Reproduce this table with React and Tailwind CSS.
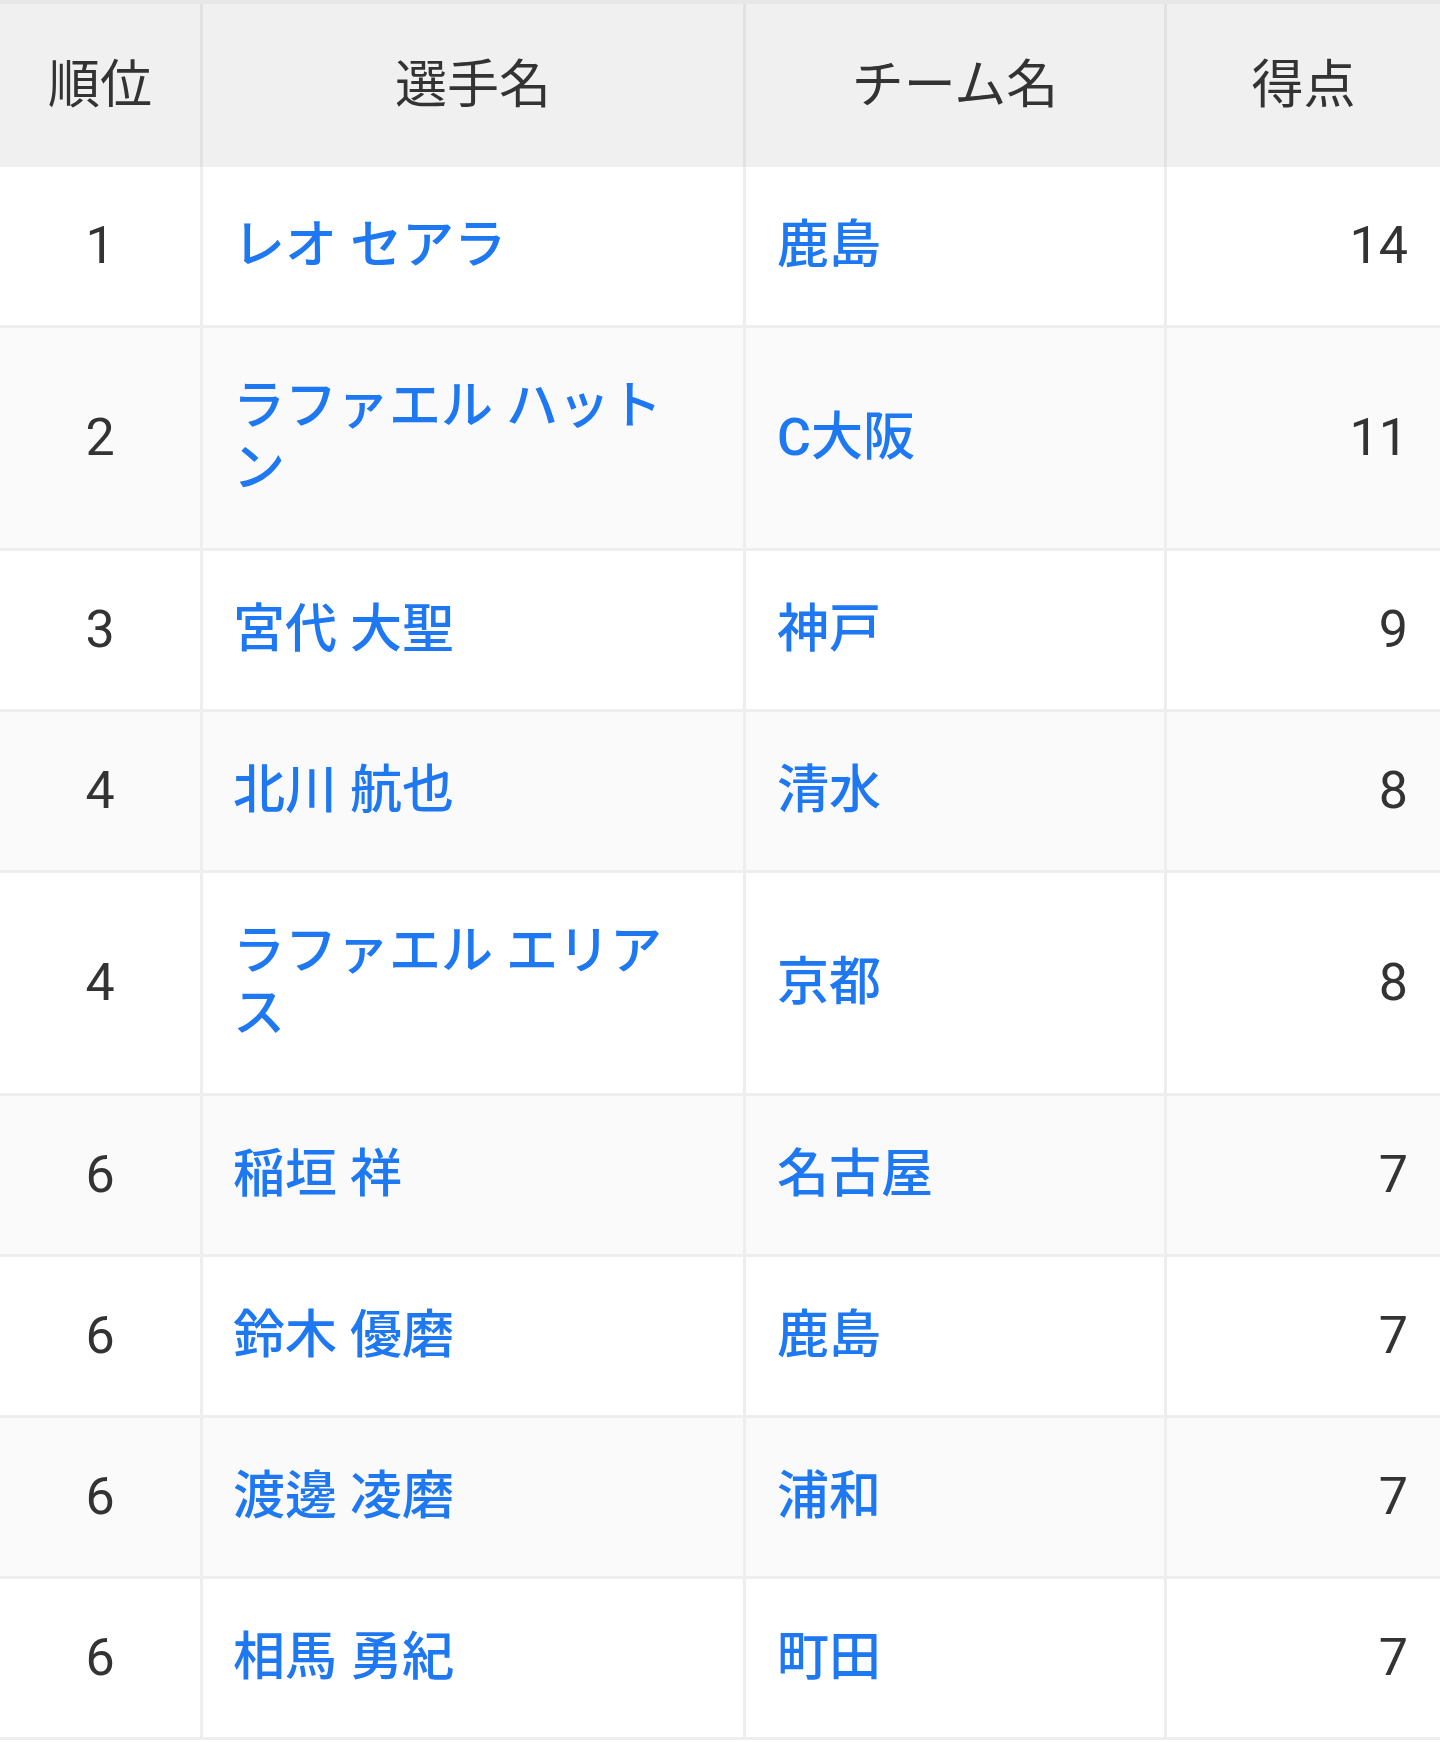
import React from "react";

const rows = [
  { rank: 1, name: "レオ セアラ", team: "鹿島", goals: 14 },
  { rank: 2, name: "ラファエル ハットン", team: "C大阪", goals: 11 },
  { rank: 3, name: "宮代 大聖", team: "神戸", goals: 9 },
  { rank: 4, name: "北川 航也", team: "清水", goals: 8 },
  { rank: 4, name: "ラファエル エリアス", team: "京都", goals: 8 },
  { rank: 6, name: "稲垣 祥", team: "名古屋", goals: 7 },
  { rank: 6, name: "鈴木 優磨", team: "鹿島", goals: 7 },
  { rank: 6, name: "渡邊 凌磨", team: "浦和", goals: 7 },
  { rank: 6, name: "相馬 勇紀", team: "町田", goals: 7 },
];

export default function App() {
  return (
    <div
      className="min-h-screen bg-white text-[#333333]"
      style={{ fontFamily: 'Roboto, "Noto Sans CJK JP", sans-serif' }}
    >
      <table className="w-full table-fixed border-separate border-spacing-0 border-t-[4px] border-[#e8e8e8] text-[52px] leading-[62px]">
        <colgroup>
          <col className="w-[203px]" />
          <col className="w-[543px]" />
          <col className="w-[421px]" />
          <col />
        </colgroup>
        <thead>
          <tr className="bg-[#f0f0f0]">
            <th className="h-[163px] border-r-[3px] border-[#e2e2e2] font-normal text-center">順位</th>
            <th className="border-r-[3px] border-[#e2e2e2] font-normal text-center">選手名</th>
            <th className="border-r-[3px] border-[#e2e2e2] font-normal text-center">チーム名</th>
            <th className="font-normal text-center">得点</th>
          </tr>
        </thead>
        <tbody>
          {rows.map((r, i) => (
            <tr key={i} className={i % 2 === 1 ? "bg-[#fafafa]" : "bg-white"}>
              <td className="border-r-[3px] border-b-[3px] border-[#eeeeee] py-[48px] text-center">
                {r.rank}
              </td>
              <td className="border-r-[3px] border-b-[3px] border-[#eeeeee] py-[48px] pl-[30px] pr-[60px] font-medium text-[#1e78f2]">
                <a href="#">{r.name}</a>
              </td>
              <td className="border-r-[3px] border-b-[3px] border-[#eeeeee] py-[48px] pl-[31px] font-medium text-[#1e78f2]">
                <a href="#">{r.team}</a>
              </td>
              <td className="border-b-[3px] border-[#eeeeee] py-[48px] pr-[32px] text-right">
                {r.goals}
              </td>
            </tr>
          ))}
        </tbody>
      </table>
    </div>
  );
}
